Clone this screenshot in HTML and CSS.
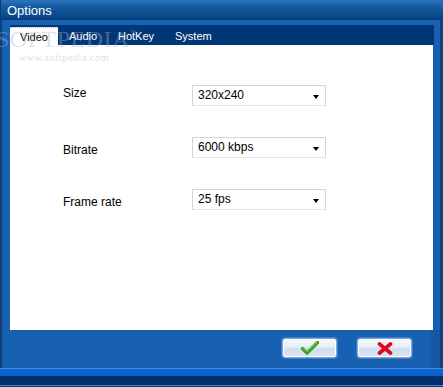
FILE: index.html
```html
<!DOCTYPE html>
<html lang="en">

<head>
    <meta charset="UTF-8">
    <title>Options</title>
    <link rel="stylesheet" href="styles.css">
</head>

<body>
    <div class="window">
        <div class="titlebar">Options</div>

        <div class="frame">
            <ul class="tabs">
                <li class="tab active">Video</li>
                <li class="tab tab-audio">Audio</li>
                <li class="tab tab-hotkey">HotKey</li>
                <li class="tab tab-system">System</li>
            </ul>

            <div class="panel">
                <div class="row">
                    <span class="label label-first">Size</span>
                    <div class="select">320x240<span class="arrow"></span></div>
                </div>
                <div class="row">
                    <span class="label">Bitrate</span>
                    <div class="select">6000 kbps<span class="arrow"></span></div>
                </div>
                <div class="row">
                    <span class="label">Frame rate</span>
                    <div class="select">25 fps<span class="arrow"></span></div>
                </div>
            </div>

            <div class="footer">
                <button class="btn">
                    <svg width="18" height="14" viewBox="0 0 18 14">
                        <path d="M1.5 7.5 L6 12 L16.5 1.5" fill="none" stroke="#3a9e22" stroke-width="3.4" stroke-linecap="round" stroke-linejoin="round"/>
                        <path d="M2.5 7 L6 10.5 L16 1" fill="none" stroke="#8fdc5a" stroke-width="1" stroke-linecap="round"/>
                    </svg>
                </button>
                <button class="btn">
                    <svg width="16" height="13" viewBox="0 0 16 13">
                        <path d="M2.5 2 L13.5 11 M13.5 2 L2.5 11" fill="none" stroke="#e0061c" stroke-width="3.6" stroke-linecap="round"/>
                    </svg>
                </button>
            </div>
        </div>

        <div class="statusbar"></div>

        <div class="watermark">SOFTPEDIA<sup>™</sup></div>
        <div class="watermark-url">www.softpedia.com</div>
    </div>
</body>

</html>
```

FILE: styles.css
```css
* {
    margin: 0;
    padding: 0;
}

ul {
    list-style: none;
}

body {
    background: #1760b0;
    font-family: "Liberation Sans", Arial, sans-serif;
}

.window {
    width: 443px;
    height: 387px;
    position: relative;
    display: flex;
    flex-direction: column;
    overflow: hidden;
    background: #1861b2;
}

.titlebar {
    height: 20px;
    box-sizing: border-box;
    padding: 4px 0 0 6px;
    color: #fff;
    font-size: 13px;
    line-height: 14px;
    background: linear-gradient(#2c74c0 0%, #145a9f 35%, #0a4a8a 80%, #083d74 100%);
    border-top-right-radius: 4px;
    border-left: 1px solid #0b3c72;
}

.frame {
    flex: 1;
    display: flex;
    flex-direction: column;
    padding: 5px 7px 0 10px;
    border-left: 2px solid #0e3f78;
    border-right: 3px solid #0d3f78;
}

.tabs {
    display: flex;
    height: 20px;
    background: #003877;
    margin-right: -1px;
    margin-left: -2px;
}

.tab {
    height: 20px;
    line-height: 23px;
    color: #fff;
    font-size: 11px;
    padding-left: 10px;
    box-sizing: border-box;
}

.tab.active {
    background: #fff;
    color: #000;
    width: 48px;
    margin-top: 2px;
    height: 18px;
    line-height: 19px;
    border-top: 1px dotted #b8b8b8;
}

.tab-audio {
    width: 49px;
    padding-left: 11px;
}

.tab-hotkey {
    width: 57px;
    padding-left: 11px;
}

.tab-system {
    width: 60px;
    padding-left: 11px;
}

.panel {
    height: 285px;
    background: #fff;
    margin-left: -2px;
    padding: 40px 0 0 53px;
    box-sizing: border-box;
    display: flex;
    flex-direction: column;
    gap: 31px;
}

.row {
    display: flex;
    align-items: center;
    height: 21px;
}

.label {
    width: 129px;
    font-size: 12px;
    color: #000;
    margin-top: 4px;
}

.label-first {
    margin-top: -5px;
}

.select {
    width: 134px;
    height: 21px;
    box-sizing: border-box;
    border: 1px solid #d4d4d4;
    border-bottom-color: #e4e4e4;
    padding: 2px 0 0 5px;
    font-size: 12px;
    color: #000;
    position: relative;
}

.arrow {
    position: absolute;
    right: 6px;
    top: 9px;
    border-left: 3.5px solid transparent;
    border-right: 3.5px solid transparent;
    border-top: 4px solid #000;
}

.footer {
    height: 38px;
    display: flex;
    justify-content: flex-end;
    align-items: flex-start;
    padding: 8px 28px 0 0;
    box-sizing: border-box;
    gap: 20px;
    background: linear-gradient(90deg, #1861b2 0, #1861b2 calc(100% - 10px), #1558a4 calc(100% - 10px));
    margin-right: -7px;
}

.btn {
    width: 55px;
    height: 20px;
    border: 1px solid #7fa6d6;
    border-radius: 3px;
    background: linear-gradient(#f4f8fd 0%, #e6eef8 45%, #cddcef 55%, #dbe6f4 100%);
    box-shadow: inset 0 0 0 1px #fff, 0 0 0 1px #3d7cc4;
    display: flex;
    align-items: center;
    justify-content: center;
}

.statusbar {
    height: 19px;
    background: linear-gradient(#3a8ae0 0, #3a8ae0 1px, #0a68d0 1px, #0560c8 8px, #00306e 8px, #002e6a 17px, #4a7fbf 17px, #4a7fbf 18px, #0c3a70 18px);
}

.watermark {
    position: absolute;
    left: -4px;
    top: 26px;
    font-family: "Liberation Serif", "Times New Roman", serif;
    font-size: 24px;
    letter-spacing: 0.5px;
    color: rgba(170, 180, 195, 0.4);
    pointer-events: none;
}

.watermark sup {
    font-family: "Liberation Sans", Arial, sans-serif;
    font-size: 7px;
    vertical-align: 12px;
}

.watermark-url {
    position: absolute;
    left: 19px;
    top: 52px;
    font-family: "Liberation Serif", "Times New Roman", serif;
    font-size: 10px;
    letter-spacing: 0.6px;
    color: rgba(200, 200, 205, 0.6);
}
```
